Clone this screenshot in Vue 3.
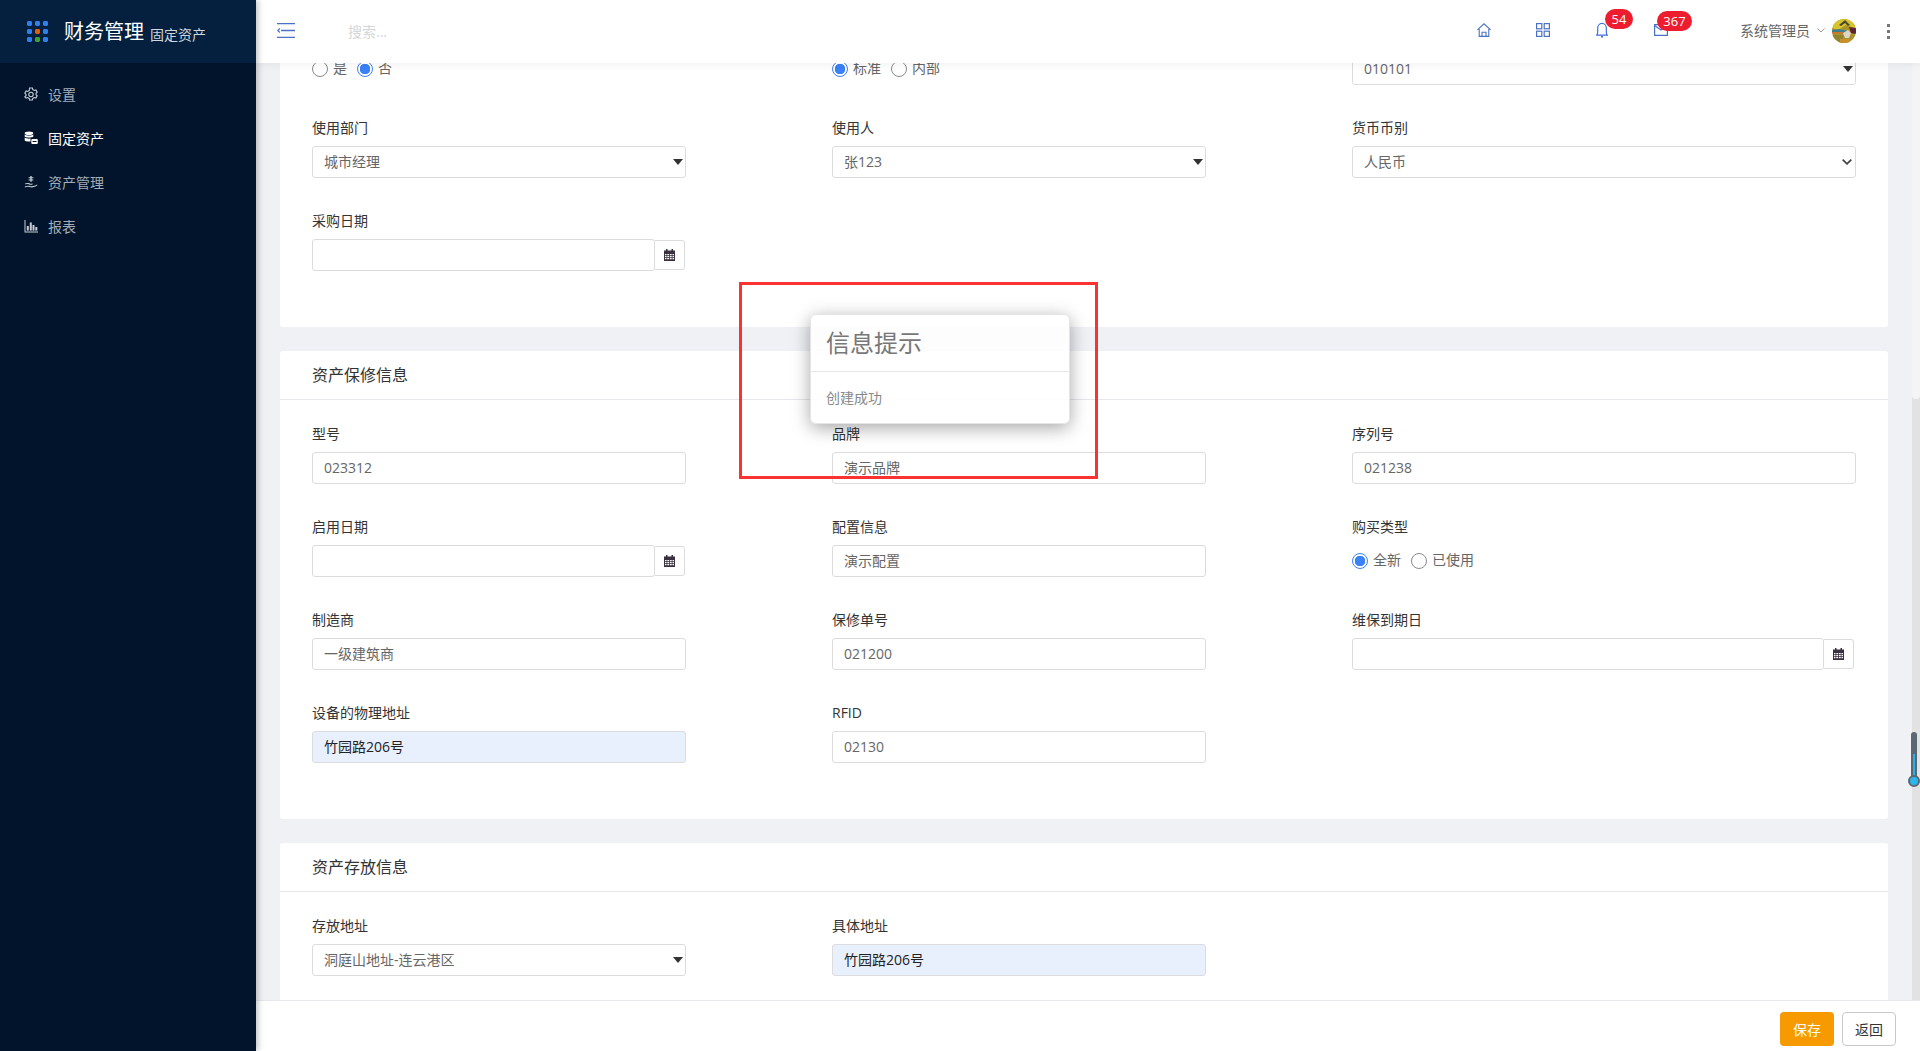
<template>
  <div class="layout">
    <aside class="sidebar">
      <div class="brand">
        <svg class="brand-logo" width="21" height="21" viewBox="0 0 21 21">
          <rect
            v-for="d in logoDots"
            :key="d.x + '-' + d.y"
            :x="d.x"
            :y="d.y"
            width="5"
            height="5"
            rx="1.4"
            :fill="d.c"
          />
        </svg>
        <span class="brand-title">财务管理</span>
        <span class="brand-sub">固定资产</span>
      </div>
      <nav class="menu">
        <a class="menu-item">
          <svg class="menu-icon" viewBox="0 0 14 14" fill="none" stroke="currentColor" stroke-width="1.1">
            <path d="M5.6 1h2.8l.4 1.6 1.5.8 1.6-.5 1.3 2.3-1.2 1.1v1.4l1.2 1.1-1.3 2.3-1.6-.5-1.5.8-.4 1.6H5.6l-.4-1.6-1.5-.8-1.6.5L.8 9.800 2 8.700V7.300L.8 6.200l1.300-2.300 1.600.5 1.500-.8z" />
            <circle cx="7" cy="7.500" r="2.200" />
          </svg>
          <span>设置</span>
        </a>
        <a class="menu-item active">
          <svg class="menu-icon" viewBox="0 0 14 14" fill="currentColor">
            <ellipse cx="5" cy="2.300" rx="4.300" ry="1.800" />
            <path d="M.7 3.600c1 1.300 7.600 1.300 8.600 0v1.900c-1 1.300-7.600 1.300-8.600 0zM.7 6.600c1 1.100 4.200 1.300 5.800 1v2.800c-2.500.3-5-.1-5.800-1z" />
            <rect x="7.300" y="8" width="6.500" height="5" rx="1" />
            <rect x="8.600" y="10" width="3.900" height="1" fill="#02142b" />
          </svg>
          <span>固定资产</span>
        </a>
        <a class="menu-item">
          <svg class="menu-icon" viewBox="0 0 14 14" fill="currentColor">
            <path d="M6.300 1h1.400v5.800H6.300z" />
            <path d="M4.600 2.300h4.800v1H4.600zM4.600 4.400h4.800v1H4.600z" />
            <path d="M.8 8.600c2-.9 3.400-.7 5-.2 1.200.4 1.900.4 2.900.2l-.2 1c-1.300.3-2.300.2-3.500-.2-1.100-.4-2-.4-3.300.1zM6 11c2.300.5 4.300.1 7.200-1.500l.2.800c-2.600 1.900-5.300 2.500-8 1.800-1.700-.4-3-.3-4.600.3v-.9c1.800-.8 3.300-.9 5.200-.5z" />
          </svg>
          <span>资产管理</span>
        </a>
        <a class="menu-item">
          <svg class="menu-icon" viewBox="0 0 14 14" fill="currentColor">
            <path d="M.5 1h1v11.500H14v1H.5z" />
            <rect x="2.800" y="7" width="2" height="4.600" />
            <rect x="5.800" y="3.500" width="2" height="8.100" />
            <rect x="8.500" y="6" width="2" height="5.600" />
            <rect x="11.300" y="8" width="2" height="3.600" />
          </svg>
          <span>报表</span>
        </a>
      </nav>
    </aside>

    <div class="main">
      <header class="topbar">
        <svg class="toggle" width="18" height="15" viewBox="0 0 18 15" fill="none" stroke="#4a72c4" stroke-width="1.300">
          <path d="M0 .7h18M4 7.500h14M0 14.300h18" />
          <path d="M2.800 5.500.8 7.500l2 2" />
        </svg>
        <span class="search">搜索...</span>
        <div class="top-actions">
          <svg class="top-icon home" viewBox="0 0 14 14" fill="none" stroke="#4a72c4" stroke-width="1.100">
            <path d="M.4 6.800 7 .8l6.600 6M2.200 6v7.400h9.600V6" />
            <path d="M5 13.400V9.200h4v4.200" />
          </svg>
          <svg class="top-icon apps" viewBox="0 0 14 14" fill="none" stroke="#4a72c4" stroke-width="1.200">
            <rect x=".6" y=".6" width="5.200" height="5.200" />
            <rect x="8.200" y=".6" width="5.200" height="5.200" />
            <rect x=".6" y="8.200" width="5.200" height="5.200" />
            <rect x="8.200" y="8.200" width="5.200" height="5.200" />
          </svg>
          <div class="notice bell-wrap">
            <svg class="bell" width="12" height="16" viewBox="0 0 12 16" fill="none" stroke="#3d6fe0" stroke-width="1.200">
              <path d="M.6 13.200c1-.8 1.100-2 1.100-3.200V6.200C1.700 3.600 3.400 1.400 6 1.400s4.300 2.200 4.300 4.800V10c0 1.200.1 2.400 1.100 3.200z" />
              <path d="M5 14.800h2" stroke-width="1.600" />
            </svg>
            <span class="badge badge-bell">54</span>
          </div>
          <div class="notice mail-wrap">
            <svg class="mail" width="14" height="12" viewBox="0 0 14 12" fill="none" stroke="#4a72c4" stroke-width="1.200">
              <path d="M.6.600h12.800v10.800H.6z" />
              <path d="M.6 1.500 7 6l6.400-4.500" />
            </svg>
            <span class="badge badge-mail">367</span>
          </div>
          <span class="user-name">系统管理员</span>
          <svg class="user-caret" width="8" height="5" viewBox="0 0 8 5" fill="none" stroke="#999" stroke-width="1">
            <path d="M.4.500 4 4 7.600.5" />
          </svg>
          <svg class="avatar" width="24" height="24" viewBox="0 0 24 24">
            <defs>
              <clipPath id="avatar-clip"><circle cx="12" cy="12" r="12" /></clipPath>
            </defs>
            <g clip-path="url(#avatar-clip)">
              <rect width="24" height="24" fill="#a8932c" />
              <path d="M0 0h24v10L14 6 6 11 0 9z" fill="#d8c42c" />
              <path d="M7 6l6-5 5 5-2 1-3-3-4 3z" fill="#4a4a30" />
              <path d="M0 11l7-1 9 2-4 2H0z" fill="#3f7f8c" />
              <path d="M0 13h10l3 1.500H0z" fill="#d0752c" />
              <path d="M11 14l5-3 3 3-2 5h-4z" fill="#ddd6c8" />
              <path d="M17 8l7 1v6l-5-1z" fill="#5e2232" />
              <path d="M0 16h11v8H0z" fill="#8f8430" />
              <path d="M8 20h10v4H8z" fill="#c98f2a" />
            </g>
          </svg>
          <span class="more"><i></i><i></i><i></i></span>
        </div>
      </header>

      <div class="content">
        <div class="scroller">
          <section class="card card-first">
            <div class="card-body">
              <div class="form-grid">
                <div class="field no-label">
                  <div class="radios">
                    <label class="radio"><span class="dot"></span>是</label>
                    <label class="radio"><span class="dot on"></span>否</label>
                  </div>
                </div>
                <div class="field no-label">
                  <div class="radios">
                    <label class="radio"><span class="dot on"></span>标准</label>
                    <label class="radio"><span class="dot"></span>内部</label>
                  </div>
                </div>
                <div class="field no-label">
                  <div class="box box-select">010101<i class="tri"></i></div>
                </div>

                <div class="field">
                  <label class="field-label">使用部门</label>
                  <div class="box box-select">城市经理<i class="tri"></i></div>
                </div>
                <div class="field">
                  <label class="field-label">使用人</label>
                  <div class="box box-select">张123<i class="tri"></i></div>
                </div>
                <div class="field">
                  <label class="field-label">货币币别</label>
                  <div class="box box-select">
                    人民币
                    <svg class="chev" width="10" height="6" viewBox="0 0 10 6" fill="none" stroke="#444" stroke-width="1.800">
                      <path d="M.7.700 5 4.800 9.300.7" />
                    </svg>
                  </div>
                </div>

                <div class="field">
                  <label class="field-label">采购日期</label>
                  <div class="date-group">
                    <div class="box"></div>
                    <span class="date-btn">
                      <svg width="11" height="12" viewBox="0 0 11 12"><path :d="calendarPath" fill="#3a3040" fill-rule="evenodd" /></svg>
                    </span>
                  </div>
                </div>
              </div>
            </div>
          </section>

          <section class="card">
            <h3 class="card-title">资产保修信息</h3>
            <div class="card-body">
              <div class="form-grid">
                <div class="field">
                  <label class="field-label">型号</label>
                  <div class="box">023312</div>
                </div>
                <div class="field">
                  <label class="field-label">品牌</label>
                  <div class="box">演示品牌</div>
                </div>
                <div class="field">
                  <label class="field-label">序列号</label>
                  <div class="box">021238</div>
                </div>

                <div class="field">
                  <label class="field-label">启用日期</label>
                  <div class="date-group">
                    <div class="box"></div>
                    <span class="date-btn">
                      <svg width="11" height="12" viewBox="0 0 11 12"><path :d="calendarPath" fill="#3a3040" fill-rule="evenodd" /></svg>
                    </span>
                  </div>
                </div>
                <div class="field">
                  <label class="field-label">配置信息</label>
                  <div class="box">演示配置</div>
                </div>
                <div class="field">
                  <label class="field-label">购买类型</label>
                  <div class="radios">
                    <label class="radio"><span class="dot on"></span>全新</label>
                    <label class="radio"><span class="dot"></span>已使用</label>
                  </div>
                </div>

                <div class="field">
                  <label class="field-label">制造商</label>
                  <div class="box">一级建筑商</div>
                </div>
                <div class="field">
                  <label class="field-label">保修单号</label>
                  <div class="box">021200</div>
                </div>
                <div class="field">
                  <label class="field-label">维保到期日</label>
                  <div class="date-group date-group-wide">
                    <div class="box"></div>
                    <span class="date-btn">
                      <svg width="11" height="12" viewBox="0 0 11 12"><path :d="calendarPath" fill="#3a3040" fill-rule="evenodd" /></svg>
                    </span>
                  </div>
                </div>

                <div class="field">
                  <label class="field-label">设备的物理地址</label>
                  <div class="box box-fill">竹园路206号</div>
                </div>
                <div class="field">
                  <label class="field-label">RFID</label>
                  <div class="box">02130</div>
                </div>
              </div>
            </div>
          </section>

          <section class="card">
            <h3 class="card-title">资产存放信息</h3>
            <div class="card-body">
              <div class="form-grid">
                <div class="field">
                  <label class="field-label">存放地址</label>
                  <div class="box box-select">洞庭山地址-连云港区<i class="tri"></i></div>
                </div>
                <div class="field">
                  <label class="field-label">具体地址</label>
                  <div class="box box-fill">竹园路206号</div>
                </div>
              </div>
            </div>
          </section>
        </div>

        <div class="scrollbar">
          <div class="scroll-thumb"></div>
          <div class="thermo">
            <span class="thermo-tube"><i></i></span>
            <span class="thermo-bulb"></span>
          </div>
        </div>

        <div class="toast">
          <div class="toast-head">信息提示</div>
          <div class="toast-body">创建成功</div>
        </div>
        <div class="mark"></div>
      </div>

      <footer class="footer">
        <button class="btn btn-save">保存</button>
        <button class="btn btn-back">返回</button>
      </footer>
    </div>
  </div>
</template>

<script setup>
const logoColors = [
  '#2f80ed', '#2f80ed', '#2f80ed',
  '#2f80ed', '#e0600a', '#2f80ed',
  '#2f80ed', '#3aa335', '#2f80ed'
]

const logoDots = logoColors.map((c, i) => ({
  x: (i % 3) * 8,
  y: Math.floor(i / 3) * 8,
  c
}))

// font-awesome style calendar, holes are the little day cells
const calendarPath =
  'M2 0h1.500v1.500h4V0H9v1.500h2V12H0V1.500h2z' +
  'M1 5v1.200h1.500V5zM3.300 5v1.200h1.800V5zM5.900 5v1.200h1.800V5zM8.500 5v1.200H10V5z' +
  'M1 7v1.200h1.500V7zM3.300 7v1.200h1.800V7zM5.900 7v1.200h1.800V7zM8.500 7v1.200H10V7z' +
  'M1 9v1.200h1.500V9zM3.300 9v1.200h1.800V9zM5.900 9v1.200h1.800V9zM8.500 9v1.200H10V9z'
</script>

<style>
html,
body {
  margin: 0;
  height: 100%;
  overflow: hidden;
}
</style>

<style scoped>
.layout {
  display: flex;
  width: 100%;
  height: 100vh;
  font-family: "Open Sans", "Noto Sans CJK SC", sans-serif;
  font-size: 14px;
  color: #333;
  background: #eff1f5;
}

.sidebar {
  flex: 0 0 256px;
  background: #02142b;
  box-shadow: 2px 0 6px rgba(0, 0, 0, 0.25);
  position: relative;
  z-index: 3;
}

.brand {
  height: 63px;
  background: #05203f;
  display: flex;
  align-items: center;
  padding-left: 27px;
  color: #fff;
}
.brand-logo {
  margin-right: 16px;
  flex: none;
}
.brand-title {
  font-size: 20px;
  line-height: 1;
}
.brand-sub {
  font-size: 14px;
  margin-left: 6px;
  margin-top: 4px;
  color: #cfd6de;
}

.menu {
  padding-top: 9px;
}
.menu-item {
  height: 44px;
  display: flex;
  align-items: center;
  padding-left: 24px;
  color: #a3acb8;
}
.menu-item.active {
  color: #fff;
}
.menu-icon {
  width: 14px;
  height: 14px;
  margin-right: 10px;
  flex: none;
  color: #c6cdd5;
}
.menu-item.active .menu-icon {
  color: #fff;
}

.main {
  flex: 1;
  min-width: 0;
  display: flex;
  flex-direction: column;
}

.topbar {
  height: 63px;
  flex: none;
  background: #fff;
  box-shadow: 0 2px 8px rgba(0, 0, 0, 0.06);
  position: relative;
  z-index: 2;
  display: flex;
  align-items: center;
  padding-left: 21px;
}
.toggle {
  flex: none;
  margin-top: -2px;
}
.search {
  margin-left: 53px;
  margin-top: -2px;
  color: #d4d6d8;
}

.top-actions {
  margin-left: auto;
  display: flex;
  align-items: center;
  padding-right: 30px;
}
.top-icon {
  width: 14px;
  height: 14px;
  margin-top: -3px;
}
.apps {
  margin-left: 45px;
}
.notice {
  position: relative;
  display: flex;
  margin-top: -3px;
}
.bell-wrap {
  margin-left: 46px;
}
.mail-wrap {
  margin-left: 46px;
}
.badge {
  position: absolute;
  top: -13px;
  height: 20px;
  border-radius: 10px;
  background: #ed1c2e;
  color: #fff;
  font-size: 13px;
  line-height: 20px;
  text-align: center;
}
.badge-bell {
  left: 9px;
  width: 28px;
}
.badge-mail {
  left: 3px;
  width: 35px;
}
.user-name {
  margin-left: 72px;
  margin-top: -3px;
  color: #666;
}
.user-caret {
  margin-left: 7px;
  margin-top: -3px;
}
.avatar {
  margin-left: 7px;
  margin-top: -1px;
}
.more {
  margin-left: 31px;
  margin-top: -1px;
  display: flex;
  flex-direction: column;
  gap: 3px;
}
.more i {
  width: 3px;
  height: 3px;
  background: #777;
}

.content {
  flex: 1;
  min-height: 0;
  display: flex;
  position: relative;
}
.scroller {
  flex: 1;
  min-width: 0;
  padding: 0 24px;
  overflow: hidden;
}

.card {
  background: #fff;
  border-radius: 3px;
  margin-bottom: 24px;
}
.card-first {
  margin-top: -10px;
}
.card-title {
  margin: 0;
  height: 49px;
  box-sizing: border-box;
  border-bottom: 1px solid #e6e7ea;
  padding-left: 32px;
  font-size: 16px;
  font-weight: 400;
  line-height: 48px;
  color: #333;
}
.card-body {
  padding: 23px 32px 56px 32px;
}
.card-first .card-body {
  padding-top: 0;
}

.form-grid {
  display: grid;
  grid-template-columns: 374px 374px 504px;
  column-gap: 146px;
  row-gap: 32px;
}
.field-label {
  display: block;
  height: 22px;
  line-height: 22px;
  margin-bottom: 7px;
  color: #333;
}

.box {
  box-sizing: border-box;
  height: 32px;
  border: 1px solid #dcdcdc;
  border-radius: 3px;
  padding: 0 11px;
  line-height: 30px;
  color: #666;
  background: #fff;
}
.box-select {
  position: relative;
}
.box-fill {
  background: #e8f0fe;
  color: #222;
}
.tri {
  position: absolute;
  right: 2px;
  top: 12px;
  border-left: 5px solid transparent;
  border-right: 5px solid transparent;
  border-top: 6px solid #333;
}
.chev {
  position: absolute;
  right: 3px;
  top: 12px;
}

.date-group {
  display: flex;
  align-items: center;
  width: calc(100% - 1px);
}
.date-group-wide {
  width: calc(100% - 2px);
}
.date-group .box {
  flex: 1;
}
.date-btn {
  box-sizing: border-box;
  flex: 0 0 30px;
  height: 30px;
  border: 1px solid #dcdcdc;
  border-left: none;
  border-radius: 0 3px 3px 0;
  display: flex;
  align-items: center;
  justify-content: center;
}

.radios {
  display: flex;
  align-items: center;
  gap: 10px;
  height: 32px;
}
.radio {
  display: flex;
  align-items: center;
  gap: 5px;
  margin-bottom: 2px;
  line-height: 12px;
  color: #666;
}
.dot {
  box-sizing: border-box;
  width: 16px;
  height: 16px;
  margin-top: 2px;
  border: 1px solid #8a8a8a;
  border-radius: 50%;
  background: #fff;
}
.dot.on {
  border-color: #3b82f6;
  background: radial-gradient(circle, #3b82f6 0 5px, #fff 5.500px);
}

.scrollbar {
  flex: 0 0 8px;
  background: #e2e2e2;
  position: relative;
}
.scroll-thumb {
  height: 336px;
  background: #f4f4f4;
  border-radius: 0 0 4px 4px;
}
.thermo {
  position: absolute;
  left: -4px;
  top: 669px;
  width: 12px;
  height: 55px;
}
.thermo-tube {
  position: absolute;
  left: 3px;
  top: 0;
  width: 6px;
  height: 48px;
  background: #5a6874;
  border-radius: 3px 3px 0 0;
}
.thermo-tube i {
  position: absolute;
  left: 2px;
  top: 22px;
  bottom: 0;
  width: 2px;
  background: #2aaee6;
}
.thermo-bulb {
  box-sizing: border-box;
  position: absolute;
  left: 0;
  bottom: 0;
  width: 12px;
  height: 12px;
  border-radius: 50%;
  border: 2px solid #5a6874;
  background: #2cb5ea;
}

.toast {
  position: absolute;
  left: 554px;
  top: 251px;
  width: 260px;
  height: 110px;
  box-sizing: border-box;
  border: 1px solid rgba(0, 0, 0, 0.1);
  border-radius: 6px;
  background: rgba(255, 255, 255, 0.85);
  box-shadow: 0 4px 18px rgba(0, 0, 0, 0.35);
  z-index: 4;
}
.toast-head {
  height: 57px;
  box-sizing: border-box;
  border-bottom: 1px solid #e8e8ea;
  padding-left: 15px;
  font-size: 24px;
  line-height: 56px;
  color: #777;
}
.toast-body {
  padding: 15px 15px 0;
  line-height: 22px;
  color: #888;
}

.mark {
  position: absolute;
  left: 483px;
  top: 219px;
  width: 359px;
  height: 197px;
  box-sizing: border-box;
  border: 3px solid #fb3232;
  z-index: 5;
}

.footer {
  height: 51px;
  flex: none;
  box-sizing: border-box;
  background: #fff;
  border-top: 1px solid #e6e7ea;
  display: flex;
  justify-content: flex-end;
  align-items: center;
  gap: 8px;
  padding-right: 24px;
  position: relative;
  z-index: 1;
}
.btn {
  width: 54px;
  height: 34px;
  margin-top: 6px;
  border-radius: 4px;
  font-family: inherit;
  font-size: 14px;
  padding: 0;
}
.btn-save {
  background: #f79a00;
  border: none;
  color: #fff;
}
.btn-back {
  background: #fff;
  border: 1px solid #c9c9c9;
  color: #333;
}
</style>
